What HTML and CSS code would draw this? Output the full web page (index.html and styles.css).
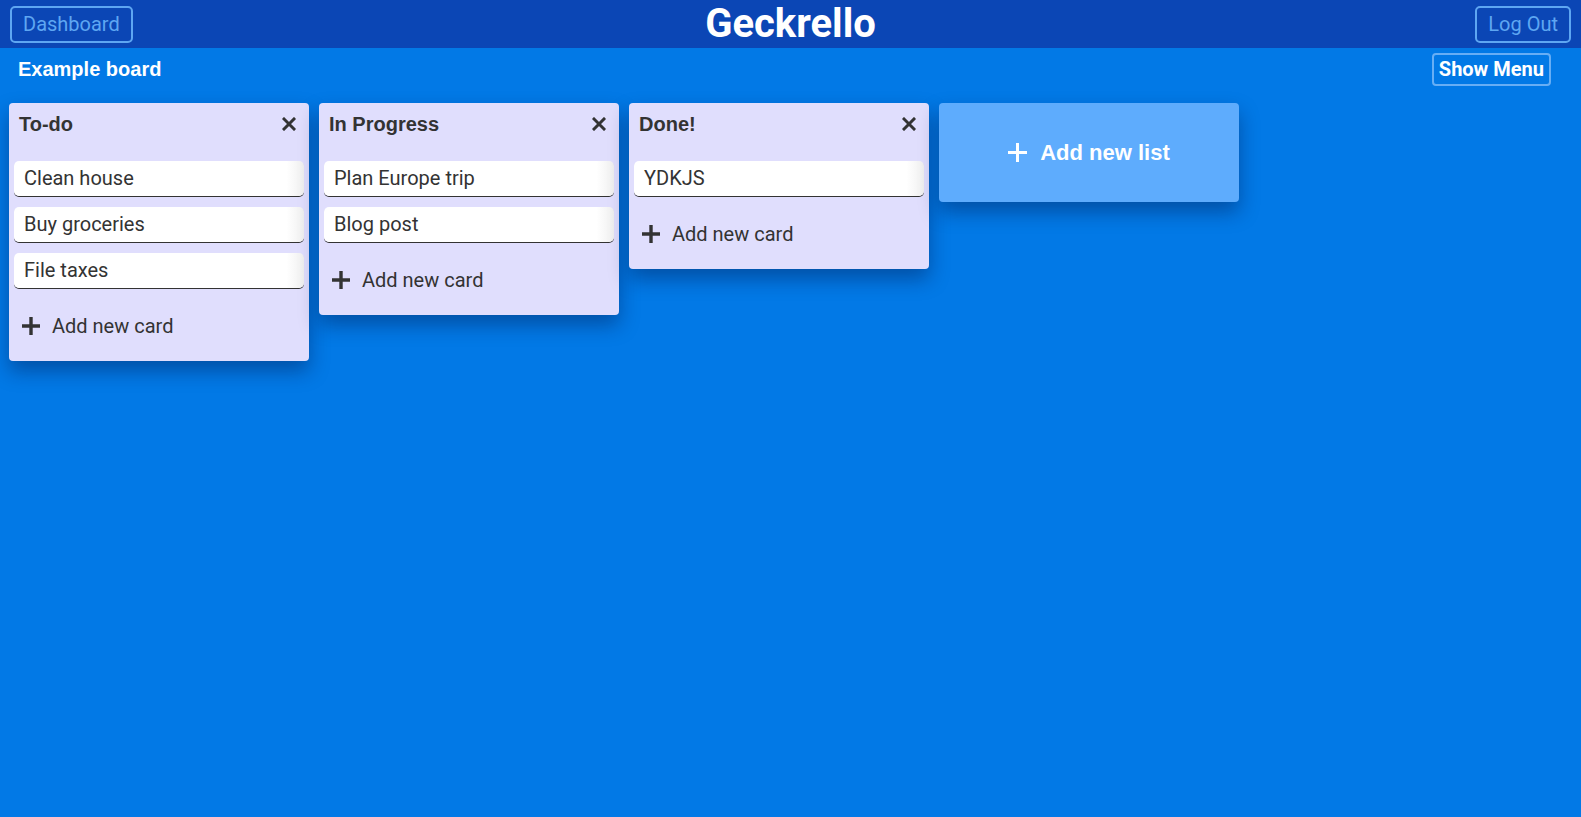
FILE: index.html
```html
<!DOCTYPE html>
<html>
<head>
<meta charset="utf-8">
<title>Geckrello</title>
<link rel="stylesheet" href="styles.css">
</head>
<body>
<header class="topbar">
  <div class="topbar-left"><button class="nav-btn">Dashboard</button></div>
  <h1 class="brand">Geckrello</h1>
  <div class="topbar-right"><button class="nav-btn">Log Out</button></div>
</header>
<div class="subbar">
  <h2 class="board-title">Example board</h2>
  <button class="menu-btn">Show Menu</button>
</div>
<main class="board">
  <section class="list">
    <div class="list-head">
      <span class="list-title">To-do</span>
      <svg class="close" viewBox="0 0 14 14" width="14" height="14"><path d="M2 2 L12 12 M12 2 L2 12" stroke="#333" stroke-width="3" stroke-linecap="square"/></svg>
    </div>
    <div class="cards">
      <div class="card">Clean house</div>
      <div class="card">Buy groceries</div>
      <div class="card">File taxes</div>
    </div>
    <div class="add-card">
      <svg class="plus" viewBox="0 0 18 18" width="18" height="18"><path d="M9 0 V18 M0 9 H18" stroke="#333" stroke-width="3.4"/></svg>
      <span>Add new card</span>
    </div>
  </section>
  <section class="list">
    <div class="list-head">
      <span class="list-title">In Progress</span>
      <svg class="close" viewBox="0 0 14 14" width="14" height="14"><path d="M2 2 L12 12 M12 2 L2 12" stroke="#333" stroke-width="3" stroke-linecap="square"/></svg>
    </div>
    <div class="cards">
      <div class="card">Plan Europe trip</div>
      <div class="card">Blog post</div>
    </div>
    <div class="add-card">
      <svg class="plus" viewBox="0 0 18 18" width="18" height="18"><path d="M9 0 V18 M0 9 H18" stroke="#333" stroke-width="3.4"/></svg>
      <span>Add new card</span>
    </div>
  </section>
  <section class="list">
    <div class="list-head">
      <span class="list-title">Done!</span>
      <svg class="close" viewBox="0 0 14 14" width="14" height="14"><path d="M2 2 L12 12 M12 2 L2 12" stroke="#333" stroke-width="3" stroke-linecap="square"/></svg>
    </div>
    <div class="cards">
      <div class="card">YDKJS</div>
    </div>
    <div class="add-card">
      <svg class="plus" viewBox="0 0 18 18" width="18" height="18"><path d="M9 0 V18 M0 9 H18" stroke="#333" stroke-width="3.4"/></svg>
      <span>Add new card</span>
    </div>
  </section>
  <section class="add-list">
    <svg class="plus-white" viewBox="0 0 19 19" width="19" height="19"><path d="M9.5 0 V19 M0 9.5 H19" stroke="#fff" stroke-width="3"/></svg>
    <span>Add new list</span>
  </section>
</main>
</body>
</html>
```
FILE: styles.css
```css
* { box-sizing: border-box; }
html, body { margin: 0; padding: 0; }
body {
  background: #0279e6;
  font-family: Roboto, "Liberation Sans", sans-serif;
  min-height: 817px;
  color: #333;
}
.topbar {
  display: grid;
  grid-template-columns: 1fr auto 1fr;
  align-items: center;
  height: 48px;
  padding: 0 10px;
  background: #0b46b5;
}
.topbar-right { display: flex; justify-content: flex-end; }
.nav-btn {
  height: 37px;
  padding: 0 11px;
  background: transparent;
  border: 2px solid #5ea6f2;
  border-radius: 5px;
  color: #5ea6f2;
  font-family: Roboto, sans-serif;
  font-size: 20px;
  line-height: 33px;
}
.brand {
  margin: 0;
  font-family: Roboto, sans-serif;
  font-weight: 700;
  font-size: 40px;
  color: #fff;
  line-height: 48px;
}
.subbar {
  display: flex;
  align-items: center;
  justify-content: space-between;
  height: 43px;
  padding: 0 30px 0 18px;
}
.board-title {
  margin: 0;
  font-family: "Liberation Sans", Arial, sans-serif;
  font-weight: 700;
  font-size: 20px;
  color: #fff;
}
.menu-btn {
  height: 33px;
  padding: 0 5px;
  background: transparent;
  border: 2px solid #67aef5;
  border-radius: 4px;
  color: #fff;
  font-family: Roboto, sans-serif;
  font-weight: 700;
  font-size: 20px;
  line-height: 29px;
}
.board {
  display: flex;
  align-items: flex-start;
  gap: 10px;
  padding: 12px 9px;
}
.list {
  width: 300px;
  flex: 0 0 300px;
  background: #e0defd;
  border-radius: 4px;
  padding: 0 5px 17px;
  box-shadow: 0 10px 20px rgba(0, 20, 70, 0.4);
}
.list-head {
  display: flex;
  align-items: center;
  justify-content: space-between;
  height: 42px;
  padding: 0 8px 0 5px;
}
.list-title {
  font-family: "Liberation Sans", Arial, sans-serif;
  font-weight: 700;
  font-size: 20px;
  color: #333;
}
.close { display: block; }
.cards {
  display: flex;
  flex-direction: column;
  gap: 11px;
  margin-top: 16px;
}
.card {
  height: 35px;
  padding: 0 10px;
  border-radius: 5px;
  background: linear-gradient(90deg, #fff 94%, #efefef 100%);
  box-shadow: 0 1px 0 #333;
  font-size: 20px;
  line-height: 34px;
  color: #333;
}
.add-card {
  display: flex;
  align-items: center;
  gap: 12px;
  height: 36px;
  margin-top: 20px;
  padding-left: 8px;
  font-size: 20px;
  color: #333;
}
.plus { display: block; }
.add-list {
  width: 300px;
  flex: 0 0 300px;
  height: 99px;
  display: flex;
  align-items: center;
  justify-content: center;
  gap: 13px;
  background: #5eacfd;
  border-radius: 4px;
  box-shadow: 0 10px 20px rgba(0, 20, 70, 0.4);
  font-family: "Liberation Sans", Arial, sans-serif;
  font-weight: 700;
  font-size: 22px;
  color: #fff;
}
.plus-white { display: block; }
```
